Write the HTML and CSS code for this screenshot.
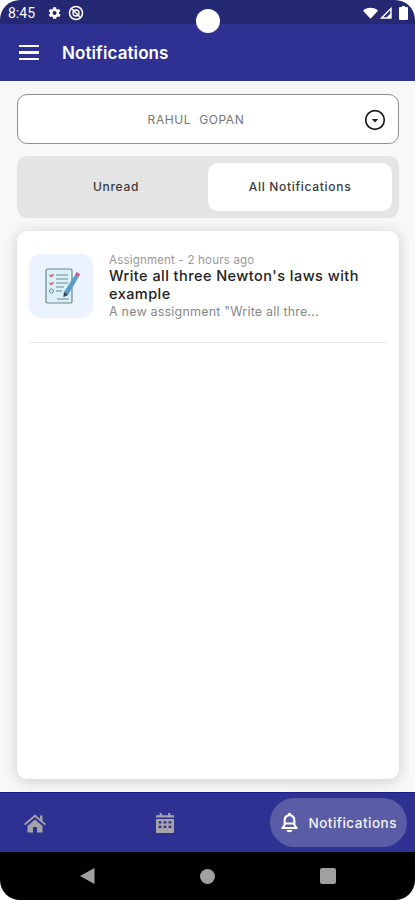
FILE: index.html

```html
<!DOCTYPE html>
<html lang="en">
<head>
  <meta charset="UTF-8">
  <title>Notifications</title>
  <link rel="stylesheet" href="styles.css">
</head>
<body>
  <div class="phone">
    <div class="camera"></div>

    <!-- status bar -->
    <div class="status-bar">
      <span class="clock">8:45</span>
      <svg class="status-icon" viewBox="0 0 24 24" width="16" height="16"><path fill="#fff" d="M19.4 13c.1-.3.1-.7.1-1s0-.7-.1-1l2.100-1.600-2-3.500-2.500 1c-.5-.4-1.100-.7-1.700-1L15.400 3.200h-4.800L10.200 5.900c-.6.300-1.200.6-1.700 1L6 5.900l-2 3.500L6.100 11c-.1.300-.1.700-.1 1s0 .7.1 1L4 14.600l2 3.500 2.500-1c.5.400 1.100.7 1.700 1l.4 2.700h4.800l.4-2.700c.6-.3 1.200-.6 1.700-1l2.500 1 2-3.500zM12.800 15a3 3 0 1 1 0-6 3 3 0 0 1 0 6z"/></svg>
      <svg class="status-icon" viewBox="0 0 16 16" width="16" height="16"><circle cx="8" cy="8" r="6.500" fill="none" stroke="#fff" stroke-width="1.600"/><circle cx="8" cy="8" r="3" fill="none" stroke="#fff" stroke-width="1.400"/><path d="M4 4l8 8" stroke="#fff" stroke-width="1.400"/></svg>
      <span class="status-right">
        <svg viewBox="0 0 16 12" width="15" height="12"><path fill="#fff" d="M0 3.500C2 1.500 5 .5 8 .5s6 1 8 3L8 12z"/></svg>
        <svg viewBox="0 0 12 12" width="12" height="12"><path fill="none" stroke="#fff" stroke-width="1.400" d="M1.500 11L11 1.500V11z"/><path fill="#fff" d="M6 11l5-5v5z"/></svg>
        <svg class="battery" viewBox="0 0 9 14" width="9" height="14"><path fill="#fff" d="M3 0h3v1h2a1 1 0 0 1 1 1v11a1 1 0 0 1-1 1H1a1 1 0 0 1-1-1V2a1 1 0 0 1 1-1h2z"/></svg>
      </span>
    </div>

    <!-- app bar -->
    <div class="app-bar">
      <div class="menu-icon"><span></span><span></span><span></span></div>
      <div class="app-title">Notifications</div>
    </div>

    <div class="content">
      <div class="student-select">
        <span class="student-name">RAHUL&nbsp; GOPAN</span>
        <svg class="select-icon" viewBox="0 0 22 22" width="22" height="22"><circle cx="11" cy="11" r="9.300" fill="none" stroke="#1c1c1c" stroke-width="1.700"/><path fill="#1c1c1c" d="M7.800 10h6.400L11 13.500z"/></svg>
      </div>

      <div class="tabs">
        <div class="tab">Unread</div>
        <div class="tab tab-active">All Notifications</div>
      </div>

      <div class="card">
        <div class="notification">
          <div class="thumb">
            <svg viewBox="0 0 38 38" width="38" height="38">
              <rect x="3" y="2" width="26" height="34" rx="1.500" fill="#d9f1f5" stroke="#73858f" stroke-width="1.200"/>
              <path d="M6.500 8l2 1.500 2-2.500" fill="none" stroke="#d6608a" stroke-width="1.600"/>
              <path d="M6.500 16l2 1.500 2-2.500" fill="none" stroke="#d6608a" stroke-width="1.600"/>
              <circle cx="8.500" cy="24" r="2" fill="none" stroke="#73858f"/>
              <path d="M13 8h12M13 12h12M13 16h12M13 20h8M13 24h6M14 32h12" stroke="#73858f" stroke-width="1.100"/>
              <path d="M21 25L32 8l3.500 2.300L25 28l-4.500 2z" fill="#5a9cc8"/>
              <path d="M32 8l1.500-3 3.500 2.300-1.500 3z" fill="#c9548a"/>
              <path d="M21 25l4 3-4.500 2z" fill="#3a4254"/>
            </svg>
          </div>
          <div class="notification-text">
            <div class="meta">Assignment - 2 hours ago</div>
            <div class="title">Write all three Newton's laws with example</div>
            <div class="preview">A new assignment "Write all thre...</div>
          </div>
        </div>
        <div class="divider"></div>
      </div>
    </div>

    <!-- bottom navigation -->
    <div class="bottom-nav">
      <svg class="nav-home" viewBox="0 0 24 24" width="24" height="24"><path fill="#a3a3a9" d="M12 3.500L1 13l1.300 1.300L12 6l9.700 8.300L23 13l-3.500-3V4.500h-2.500v3.300zM4.500 15v6.500h5.500V16h4v5.500h5.500V15L12 8.500z"/></svg>
      <svg class="nav-calendar" viewBox="0 0 20 24" width="18" height="22"><path fill="#a3a3a9" fill-rule="evenodd" d="M4 1h2.500v2.500h7V1H16v2.500h4V6H0V3.500h4zM0 7.500h20V22a1 1 0 0 1-1 1H1a1 1 0 0 1-1-1zM3 10v2.500h3V10zm5.500 0v2.500h3V10zm5.500 0v2.500h3V10zM3 15v2.500h3V15zm5.500 0v2.500h3V15zm5.500 0v2.500h3V15z"/></svg>
      <div class="nav-active">
        <svg viewBox="0 0 20 22" width="19" height="21"><path fill="#fff" fill-rule="evenodd" d="M8.500 1h3v1.300c3 .7 4.700 3 4.700 6.200V13l2.300 3.500v1.300h-17v-1.300L3.800 13V8.500c0-3.200 1.700-5.500 4.700-6.200zM10 4.300c-2.400 0-4 1.800-4 4.400V11h8V8.700c0-2.600-1.600-4.400-4-4.400zM6 13v.7l-1.300 2h10.600l-1.300-2V13z"/><path fill="#fff" d="M7 18.800h6c0 1.400-1.300 2.400-3 2.400s-3-1-3-2.400z"/></svg>
        <span>Notifications</span>
      </div>
    </div>

    <!-- android nav -->
    <div class="system-nav">
      <svg viewBox="0 0 16 18" width="16" height="18"><path fill="#a0a0a0" d="M15.500 1v16L1 9z"/></svg>
      <div class="sys-circle"></div>
      <div class="sys-square"></div>
    </div>
  </div>
</body>
</html>
```

FILE: styles.css

```css
* {
  box-sizing: border-box;
}

body {
  margin: 0;
  background-color: #fff;
  font-family: 'Inter', 'Roboto', sans-serif;
}

.phone {
  position: relative;
  width: 415px;
  height: 900px;
  display: flex;
  flex-direction: column;
  overflow: hidden;
  border-radius: 20px;
  background-color: #f8f8f8;
}

.camera {
  position: absolute;
  top: 9px;
  left: 196px;
  width: 24px;
  height: 24px;
  border-radius: 50%;
  background-color: #fff;
}

.status-bar {
  height: 24px;
  display: flex;
  align-items: center;
  gap: 6px;
  padding: 2px 7px 0 8px;
  background-color: #252873;
  color: #fff;
}

.clock {
  font-family: 'Roboto', sans-serif;
  font-size: 14px;
  margin-right: 5px;
}

.status-right {
  margin-left: auto;
  display: flex;
  align-items: center;
  gap: 2px;
}

.battery {
  margin-left: 5px;
}

.app-bar {
  height: 57px;
  display: flex;
  align-items: center;
  gap: 23px;
  padding: 0 19px;
  background-color: #2e3192;
}

.menu-icon {
  width: 20px;
  display: flex;
  flex-direction: column;
  gap: 4px;
}

.menu-icon span {
  height: 2.500px;
  background-color: #fff;
}

.app-title {
  color: #fff;
  font-size: 17px;
  font-weight: 600;
  letter-spacing: 0.1px;
}

.content {
  flex: 1;
  display: flex;
  flex-direction: column;
  gap: 12px;
  padding: 13px 16px 13px 17px;
  min-height: 0;
}

.student-select {
  position: relative;
  height: 50px;
  flex: none;
  display: flex;
  align-items: center;
  justify-content: center;
  padding-right: 24px;
  background-color: #fff;
  border: 1px solid #8e8e8e;
  border-radius: 10px;
}

.student-name {
  font-size: 12px;
  letter-spacing: 0.6px;
  color: #777;
}

.select-icon {
  position: absolute;
  right: 12px;
  top: 14px;
}

.tabs {
  height: 62px;
  flex: none;
  display: flex;
  padding: 7px;
  background-color: #e5e4e5;
  border-radius: 10px;
}

.tab {
  flex: 1;
  display: flex;
  align-items: center;
  justify-content: center;
  padding-bottom: 2px;
  font-size: 12px;
  font-weight: 500;
  letter-spacing: 0.7px;
  color: #3a3a3a;
  border-radius: 10px;
}

.tab-active {
  background-color: #fff;
}

.card {
  flex: 1;
  margin-top: 1px;
  padding: 23px 12px 0;
  background-color: #fff;
  border-radius: 10px;
  box-shadow: 0 2px 14px rgba(0,0,0,0.18);
}

.notification {
  display: flex;
  gap: 16px;
}

.thumb {
  width: 64px;
  height: 64px;
  flex: none;
  display: flex;
  align-items: center;
  justify-content: center;
  padding-left: 2px;
  background-color: #ebf3fe;
  border-radius: 12px;
}

.notification-text {
  min-width: 0;
  flex: 1;
}

.meta {
  font-size: 11.500px;
  line-height: 13px;
  letter-spacing: 0.2px;
  color: #999;
}

.title {
  font-size: 14.500px;
  line-height: 18px;
  font-weight: 500;
  letter-spacing: 0.45px;
  color: #222;
}

.preview {
  margin-top: 1px;
  font-size: 12.500px;
  line-height: 15px;
  letter-spacing: 0.2px;
  color: #888;
}

.divider {
  height: 1px;
  margin-top: 23px;
  background-color: #e6e6e6;
}

.bottom-nav {
  position: relative;
  height: 60px;
  flex: none;
  display: flex;
  align-items: center;
  padding: 0 8px 0 23px;
  background-color: #2e3192;
  border-top: 1px solid #1b1d86;
}

.nav-home {
  margin-right: 109px;
}

.nav-active {
  margin-left: auto;
  height: 49px;
  display: flex;
  align-items: center;
  gap: 9px;
  padding: 0 10px 0 10px;
  border-radius: 25px;
  background-color: #5a5ca6;
  color: #f4f4f8;
  font-size: 13.500px;
  font-weight: 500;
  letter-spacing: 0.5px;
}

.system-nav {
  height: 48px;
  flex: none;
  display: flex;
  align-items: center;
  justify-content: space-between;
  padding: 0 79px;
  background-color: #000;
}

.sys-circle {
  width: 15px;
  height: 15px;
  border-radius: 50%;
  background-color: #a0a0a0;
}

.sys-square {
  width: 16px;
  height: 16px;
  border-radius: 2px;
  background-color: #a0a0a0;
}
```
